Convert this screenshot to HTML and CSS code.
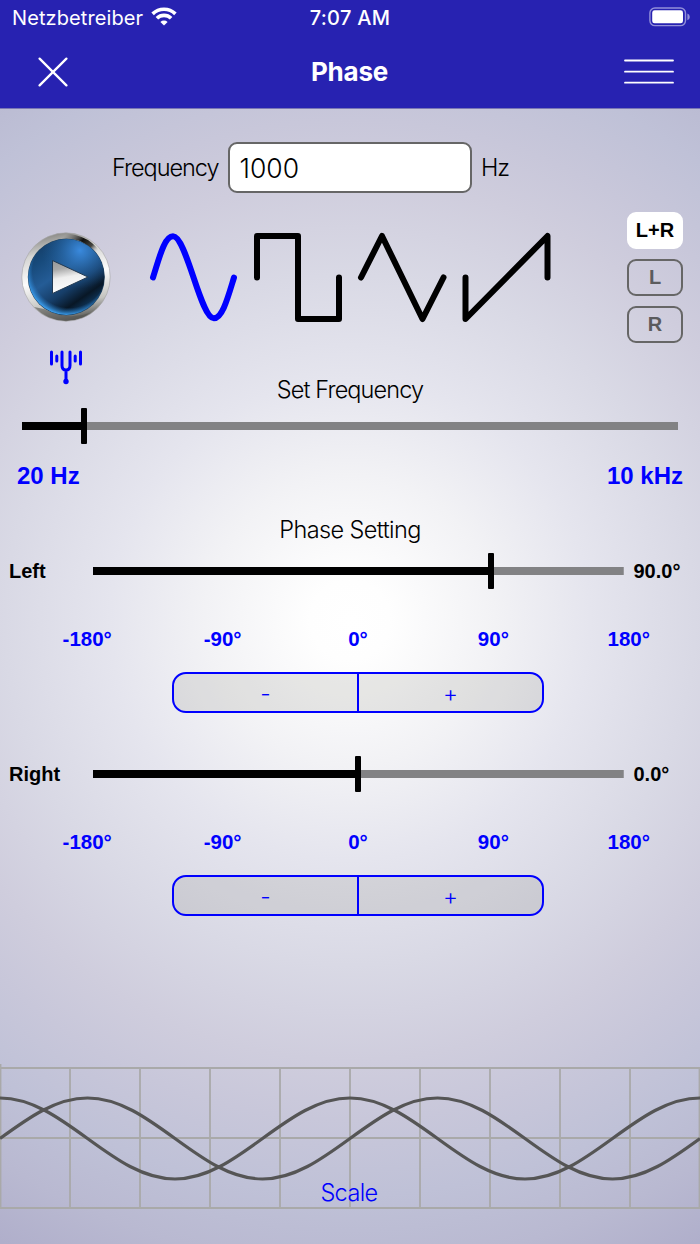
FILE: index.html
```html
<!DOCTYPE html>
<html lang="en">
<head>
<meta charset="utf-8">
<title>Phase</title>
<link rel="stylesheet" href="styles.css">
</head>
<body>
<div class="app">
  <header class="header">
    <div class="status">
      <div class="carrier">
        <span>Netzbetreiber</span>
        <svg width="26" height="19" viewBox="0 0 26 19" fill="none" stroke="#fff" stroke-width="3.6">
          <path d="M1.6 6.9a16.2 16.2 0 0 1 22.8 0"/>
          <path d="M5.9 11.3a10.1 10.1 0 0 1 14.2 0"/>
          <path d="M13 18.6l-3.6-3.7a5.1 5.1 0 0 1 7.2 0z" fill="#fff" stroke="none"/>
        </svg>
      </div>
      <span class="time">7:07 AM</span>
      <svg class="battery" width="42" height="20" viewBox="0 0 42 20">
        <rect x=".9" y="1" width="35.6" height="17.6" rx="5" fill="none" stroke="#928fd9" stroke-width="1.4"/>
        <rect x="3.200" y="3.300" width="30.800" height="13" rx="2.4" fill="#fff"/>
        <path d="M38.4 6.6q2.4 1 2.4 3.3t-2.4 3.3z" fill="#928fd9"/>
      </svg>
    </div>
    <nav class="nav">
      <svg width="30" height="30" viewBox="0 0 30 30" stroke="#fff" stroke-width="2.3" stroke-linecap="round"><path d="M1.6 1.6l26.8 26.8M28.4 1.6L1.6 28.4"/></svg>
      <h1 class="title">Phase</h1>
      <svg width="52" height="28" viewBox="0 0 52 28" stroke="#fff" stroke-width="1.8" stroke-linecap="round"><path d="M2 2.500h48M2 13.700h48M2 24.700h48"/></svg>
    </nav>
  </header>

  <main class="main">
    <div class="frequency">
      <label class="light" for="freq">Frequency</label>
      <input class="field" id="freq" value="1000">
      <span class="light hz">Hz</span>
    </div>

    <section class="generator">
      <div class="playcol">
        <svg width="92" height="92" viewBox="0 0 92 92">
          <defs>
            <linearGradient id="rim" x1=".4" y1="0" x2=".6" y2="1">
              <stop offset="0" stop-color="#8a8a86"/><stop offset=".2" stop-color="#d4d4d2"/><stop offset=".5" stop-color="#fcfcfc"/><stop offset=".8" stop-color="#c4c4c0"/><stop offset="1" stop-color="#4c4c48"/>
            </linearGradient>
            <linearGradient id="shade" x1=".35" y1="0" x2=".95" y2=".35">
              <stop offset="0" stop-color="#444" stop-opacity="0"/><stop offset=".45" stop-color="#11110f"/><stop offset=".75" stop-color="#44443f"/><stop offset="1" stop-color="#ccc" stop-opacity="0"/>
            </linearGradient>
            <linearGradient id="face" x1=".15" y1="0" x2=".85" y2="1">
              <stop offset="0" stop-color="#153c64"/><stop offset=".2" stop-color="#174a7b"/><stop offset=".42" stop-color="#245c96"/><stop offset=".62" stop-color="#163d67"/><stop offset=".78" stop-color="#081726"/><stop offset="1" stop-color="#16528b"/>
            </linearGradient>
            <radialGradient id="glow" cx=".68" cy=".15" r=".5">
              <stop offset="0" stop-color="#3a8ade"/><stop offset=".5" stop-color="#2b6db0" stop-opacity=".55"/><stop offset="1" stop-color="#225a93" stop-opacity="0"/>
            </radialGradient>
            <radialGradient id="edge" cx=".54" cy=".42" r=".59">
              <stop offset=".82" stop-color="#2b86d8" stop-opacity="0"/><stop offset="1" stop-color="#43adff"/>
            </radialGradient>
            <linearGradient id="arrow" x1=".2" y1="0" x2=".4" y2="1">
              <stop offset="0" stop-color="#999"/><stop offset=".25" stop-color="#aaa"/><stop offset=".52" stop-color="#eee"/><stop offset="1" stop-color="#fff"/>
            </linearGradient>
          </defs>
          <circle cx="46" cy="46" r="44.200" fill="url(#rim)" stroke="#a5a5a6" stroke-width=".6"/>
          <path d="M26 7Q46-3 68 9Q83 19 87 37L80 37Q75 17 60 10Q44 4 26 11z" fill="url(#shade)"/>
          <path d="M14 76Q28 90 46 89.500Q61 89 70 82Q47 90 24 78z" fill="#555551" opacity=".6"/>
          <circle cx="46.3" cy="46" r="38.500" fill="#24445f"/>
          <circle cx="46.3" cy="46" r="38" fill="url(#face)"/>
          <circle cx="46.3" cy="46" r="38" fill="url(#glow)"/>
          <circle cx="46.3" cy="46" r="38" fill="url(#edge)"/>
          <path d="M32.5 29.5L68 46 32.5 62.5z" fill="url(#arrow)" stroke="#233a52" stroke-width="1"/>
        </svg>
        <svg class="fork" width="36" height="38" viewBox="0 0 36 38" fill="none" stroke="#0000ff" stroke-width="3" stroke-linecap="round">
          <path d="M3.5 4v12M8.8 8v5M14 4v13.5c0 3 1.6 4.5 4 4.5s4-1.5 4-4.5V4M27.2 8v5M32.5 4v12M18 22v11"/>
          <circle cx="18" cy="33.500" r="2.7" fill="#0000ff" stroke="none"/>
        </svg>
      </div>
      <div class="waves">
        <svg class="wave wave-on" viewBox="0 0 96 96"><path d="M7 48.5C13.5 28 18.5 7.3 27 7.3C40.5 7.3 54.5 89.3 67.8 89.3C76.5 89.3 82 68 88 48.5"/></svg>
        <svg class="wave" viewBox="0 0 96 96"><path d="M7 48.5V7H48V90H89V48.5"/></svg>
        <svg class="wave" viewBox="0 0 96 96"><path d="M7 48.5L28 7L68.5 90L89.5 48.5"/></svg>
        <svg class="wave" viewBox="0 0 96 96"><path d="M7.500 48.500V90L89.500 7V48.500"/></svg>
      </div>
      <div class="channels">
        <button class="chan chan-on">L+R</button>
        <button class="chan">L</button>
        <button class="chan">R</button>
      </div>
    </section>

    <section class="sweep">
      <h2 class="light caption set">Set Frequency</h2>
      <div class="track"><div class="fill" style="width:9.45%"></div><div class="thumb"></div></div>
      <div class="limits"><span>20 Hz</span><span>10 kHz</span></div>
    </section>

    <h2 class="light caption setting">Phase Setting</h2>

    <section class="phase">
      <div class="row"><span class="side">Left</span><div class="track"><div class="fill" style="width:75%"></div><div class="thumb"></div></div><span class="value">90.0°</span></div>
      <div class="ticks"><span>-180°</span><span>-90°</span><span>0°</span><span>90°</span><span>180°</span></div>
      <div class="stepper"><button>-</button><button>+</button></div>
    </section>
    <section class="phase">
      <div class="row"><span class="side">Right</span><div class="track"><div class="fill" style="width:50%"></div><div class="thumb"></div></div><span class="value">0.0°</span></div>
      <div class="ticks"><span>-180°</span><span>-90°</span><span>0°</span><span>90°</span><span>180°</span></div>
      <div class="stepper"><button>-</button><button>+</button></div>
    </section>
  </main>

  <footer class="scope">
    <svg width="700" height="146" viewBox="0 0 700 146" fill="none">
      <path d="M0 4H700M0 74H700M0 144H700M.5 0V145M70 4V145M140 4V145M210 4V145M280 4V145M350 4V145M420 4V145M490 4V145M560 4V145M630 4V145M699.500 4V145" stroke="#a9a9a9" stroke-width="1.8"/>
      <g stroke="#555" stroke-width="3.2">
        <path d="M0 74.500c28.500-20.750 55.800-40.500 87.500-40.500s59 19.750 87.500 40.500s55.800 40.500 87.500 40.500s59-19.750 87.500-40.500s55.800-40.500 87.500-40.500s59 19.750 87.500 40.500s55.800 40.500 87.500 40.500s59-19.750 87.500-40.500"/>
        <path d="M0 34c31.700 0 59 19.750 87.500 40.500s55.800 40.500 87.500 40.500s59-19.750 87.500-40.500s55.800-40.500 87.500-40.500s59 19.750 87.500 40.500s55.800 40.500 87.500 40.500s59-19.750 87.500-40.500s55.800-40.500 87.500-40.500"/>
      </g>
    </svg>
    <button class="light scale">Scale</button>
  </footer>
</div>
</body>
</html>
```
FILE: styles.css
```css
* { box-sizing: border-box; }
body { margin: 0; font-family: "Liberation Sans", Arial, sans-serif; color: #000; }
h1, h2 { margin: 0; }
button { margin: 0; padding: 0; background: none; border: 0; font-family: inherit; }
svg { display: block; flex: none; }

.app {
  display: flex;
  flex-direction: column;
  width: 700px;
  height: 1244px;
  overflow: hidden;
  background: radial-gradient(circle at 350px 620px, #fff 0, #fefefe 40px, #f2f2f5 145px, #e5e5ee 240px, #d9d9e5 345px, #cfcddd 440px, #c8c7da 500px, #bfc1d7 575px, #b9b9d1 645px, #b0afcb 712px);
}

.header { height: 109px; flex: none; background: #2722b1; border-bottom: 1px solid #7a77b4; color: #fff; }
.status {
  display: grid;
  grid-template-columns: 1fr auto 1fr;
  align-items: center;
  height: 36px;
  padding: 0 9px 0 12px;
  font: 400 20px/36px Inter, sans-serif;
}
.carrier { display: flex; align-items: center; gap: 8px; letter-spacing: .1px; }
.carrier svg { margin-top: -3px; }
.time { font-weight: 500; letter-spacing: .3px; margin-right: 3px; }
.battery { justify-self: end; margin-top: -2px; }
.nav { display: grid; grid-template-columns: 1fr auto 1fr; align-items: center; height: 71px; padding: 0 25px 0 38px; }
.nav svg:last-child { justify-self: end; }
.title { font: 700 26px/32px Inter, sans-serif; letter-spacing: -.2px; margin-right: 14px; }

.light { font-family: Inter, sans-serif; font-weight: 300; font-size: 23.500px; line-height: 28px; letter-spacing: -.6px; }

.main { flex: 1; }
.frequency { display: flex; align-items: center; height: 51px; margin-top: 33px; padding-left: 112px; }
.frequency label { width: 115.500px; letter-spacing: -1.050px; padding-top: 1px; }
.field {
  width: 244.500px;
  height: 51px;
  padding: 0 10px;
  background: #fff;
  border: 2px solid #666;
  border-radius: 9px;
  font: 300 26.500px/32px Inter, sans-serif;
  letter-spacing: 0;
  color: #000;
}
.hz { margin-left: 9px; padding-top: 1px; letter-spacing: -1.200px; }

.generator { display: flex; height: 181px; margin-top: 19px; padding: 0 17px 0 20px; }
.playcol { width: 92px; padding-top: 19px; }
.fork { margin: 25px 0 0 28px; }
.waves { display: flex; gap: 8px; margin: 17px 0 0 33.500px; }
.wave { width: 96px; height: 96px; fill: none; stroke: #000; stroke-width: 6; stroke-linecap: round; stroke-linejoin: round; }
.wave-on { stroke: #0000ff; }
.channels { display: flex; flex-direction: column; gap: 10px; margin-left: auto; }
.chan { width: 56px; height: 37px; border: 2px solid #666; border-radius: 9px; font-size: 20px; font-weight: 700; color: #5b5b5d; }
.chan-on { background: #fff; border-color: #fff; color: #000; }

.caption { text-align: center; }
.set { letter-spacing: -.900px; }
.sweep { padding: 0 17px; margin-top: -17px; }
.track { display: flex; align-items: center; height: 36px; background: linear-gradient(#828284, #828284) center / 100% 8px no-repeat; }
.fill { height: 8px; background: #000; }
.thumb { width: 6px; height: 36px; margin-left: -3px; border-radius: 1px; background: #000; }
.sweep .track { margin: 4px 5px 0; }
.limits { display: flex; justify-content: space-between; margin-top: 18px; font-size: 24px; line-height: 28px; font-weight: 700; color: #0000ff; }
.setting { margin-top: 26px; }

.phase { height: 203px; font-size: 20px; font-weight: 700; }
.setting + .phase { margin-top: 9px; }
.row { display: grid; grid-template-columns: 84px 530.500px auto; align-items: center; padding-left: 9px; }
.value { padding-left: 10px; }
.ticks { display: grid; grid-template-columns: repeat(5, 135.400px); margin: 38px 0 0 19.500px; line-height: 24px; font-size: 20.500px; text-align: center; color: #0000ff; }
.stepper {
  display: flex;
  width: 372px;
  height: 41px;
  margin: 21px 0 0 172px;
  border: 2px solid #0000ff;
  border-radius: 14px;
  background: rgba(140, 140, 130, .18);
}
.stepper button { flex: 1; padding-top: 3px; font: 300 23px/30px Inter, sans-serif; color: #0000ff; }
.stepper button + button { border-left: 2px solid #0000ff; }

.scope { position: relative; height: 180px; flex: none; }
.scale { position: absolute; left: 0; right: 2px; top: 115px; color: #0000ff; }
```
